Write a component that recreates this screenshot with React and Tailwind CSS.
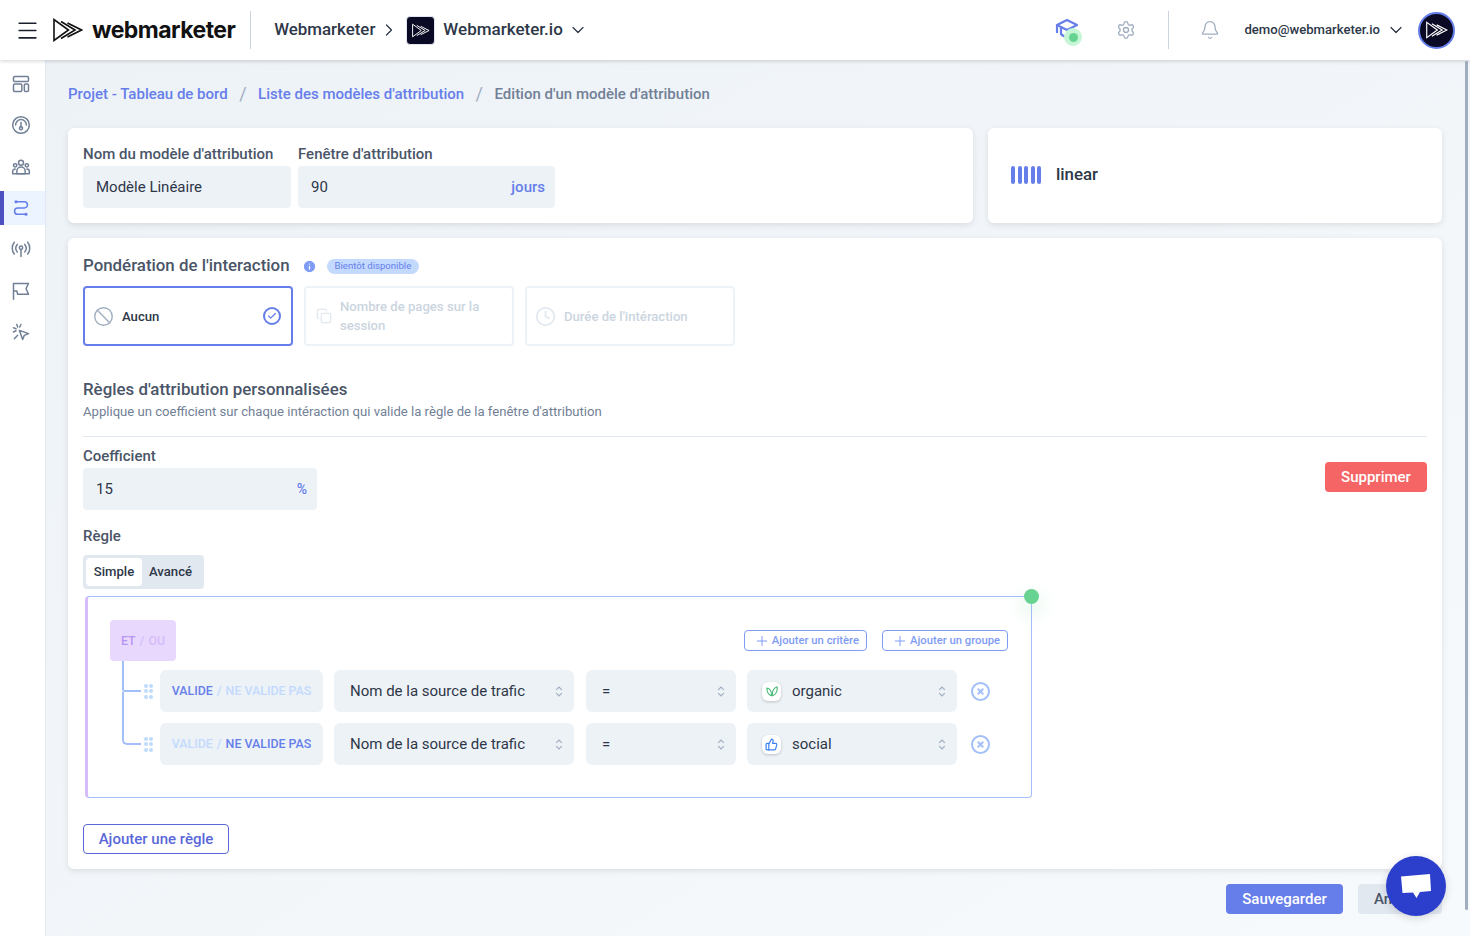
import React from "react";
import { ChevronDown, ChevronRight, Plus, Check, X, Copy, Clock, Ban, Info, Settings, Bell, ThumbsUp, Menu } from "lucide-react";

const Logo = ({ className, color = "#111" }) => (
  <svg viewBox="0 0 30 24" fill="none" stroke={color} strokeWidth="1.6" strokeLinejoin="miter" className={className}>
    <path d="M1 1.500V22.500L15.500 12Z" />
    <path d="M8 3.500L22 12L8 20.500" />
    <path d="M14.500 5L28.500 12L14.500 19" />
  </svg>
);

const SideIcon = ({ children, active }) => (
  <div className={`flex h-[34px] w-full items-center justify-center ${active ? "border-l-4 border-[#4c51bf] bg-[#ebf4ff] pr-[7px] text-[#667eea]" : "pr-[3px] text-[#718096]"}`}>
    <svg viewBox="0 0 24 24" fill="none" stroke="currentColor" strokeWidth="1.8" strokeLinecap="round" strokeLinejoin="round" className="h-[20px] w-[20px]">
      {children}
    </svg>
  </div>
);

const Sidebar = () => (
  <div className="flex w-[46px] shrink-0 flex-col gap-[7.33px] border-r border-[#e2e8f0] bg-white pt-[7px]">
    <SideIcon>
      <rect x="3" y="3" width="18" height="6" rx="1.5" />
      <rect x="3" y="12" width="10" height="9" rx="1.5" />
      <rect x="16" y="12" width="5" height="9" rx="1.5" />
    </SideIcon>
    <SideIcon>
      <circle cx="12" cy="12" r="10" />
      <path d="M5.500 12a6.500 6.500 0 0 1 13 0" />
      <path d="M12 9v5" />
      <circle cx="12" cy="16" r="1.800" />
    </SideIcon>
    <SideIcon>
      <circle cx="12" cy="7" r="3" />
      <circle cx="5" cy="10" r="2" />
      <circle cx="19" cy="10" r="2" />
      <path d="M7 20v-3a5 5 0 0 1 10 0v3Z" />
      <path d="M2 20v-2.500a3 3 0 0 1 3-3M22 20v-2.500a3 3 0 0 0-3-3M2 20h20" />
    </SideIcon>
    <SideIcon active>
      <circle cx="6" cy="4.500" r="1" />
      <path d="M6 4.500h10a3.500 3.500 0 0 1 0 7.500H8a3.700 3.700 0 0 0 0 7.500h10" />
      <circle cx="18" cy="19.500" r="1" />
    </SideIcon>
    <SideIcon>
      <circle cx="12" cy="10.500" r="2" />
      <path d="M12 12.500V21" />
      <path d="M7.500 6.500a7 7 0 0 0 0 9M16.500 6.500a7 7 0 0 1 0 9M4 4a11 11 0 0 0 0 14M20 4a11 11 0 0 1 0 14" />
    </SideIcon>
    <SideIcon>
      <path d="M3 22V3h18l-3 6 3 7H8l-1-4H3" />
    </SideIcon>
    <SideIcon>
      <path d="M10 10l11 4-5 2-2 5Z" />
      <path d="M7 3l1 3M3 7l3 1M12 3l-1.500 3M3 12l3-1.500M4 20l4-4" />
    </SideIcon>
  </div>
);

const Header = () => (
  <div className="relative z-10 flex h-[60px] shrink-0 items-center bg-white pl-[15px] pr-[15px] shadow-[0_1px_4px_rgba(0,0,0,0.18)]">
    <Menu className="h-[25px] w-[25px] text-[#1a202c]" strokeWidth={1.600} />
    <Logo className="ml-[13px] h-[24px] w-[30px]" />
    <span className="ml-[9px] font-['Inter',sans-serif] text-[23px] font-bold tracking-[-0.55px] text-[#111]">webmarketer</span>
    <div className="ml-[15px] h-[38px] w-px bg-[#cbd5e0]" />
    <span className="ml-[23px] text-[16.875px] font-medium text-[#2d3748]">Webmarketer</span>
    <ChevronRight className="ml-[4px] h-5 w-5 text-[#2d3748]" strokeWidth={1.500} />
    <div className="ml-[7px] flex h-[29px] w-[29px] items-center justify-center rounded-[4px] border border-[#e2e8f0] bg-[#0b0a24]">
      <Logo className="h-[15px] w-[18px]" color="#fff" />
    </div>
    <span className="ml-[8px] text-[17px] font-medium text-[#2d3748]">Webmarketer.io</span>
    <ChevronDown className="ml-[5px] h-5 w-5 text-[#2d3748]" strokeWidth={1.500} />
    <div className="relative ml-auto h-[26px] w-[26px]">
      <svg viewBox="0 0 24 24" fill="none" stroke="#667eea" strokeWidth="2.200" strokeLinejoin="round" className="h-[24px] w-[24px]">
        <path d="M12 3L2 8l10 5 10-5Z" />
        <path d="M6 11v6c2 2.500 5 3 7 3" />
        <path d="M2 8v8" />
      </svg>
      <span className="absolute left-[9px] top-[11px] flex h-[18px] w-[18px] items-center justify-center rounded-full bg-[#c6f6d5]">
        <span className="h-[9px] w-[9px] rounded-full bg-[#68d391]" />
      </span>
    </div>
    <Settings className="ml-[35px] h-[20px] w-[20px] text-[#a0aec0]" strokeWidth={1.6} />
    <div className="ml-[32px] h-[38px] w-px bg-[#cbd5e0]" />
    <Bell className="ml-[31px] h-[20px] w-[20px] text-[#a0aec0]" strokeWidth={1.6} />
    <span className="ml-[24px] text-[13.125px] font-medium text-[#2d3748]">demo@webmarketer.io</span>
    <ChevronDown className="ml-[6px] h-5 w-5 text-[#2d3748]" strokeWidth={1.500} />
    <div className="ml-[12px] flex h-[37px] w-[37px] items-center justify-center rounded-full border-2 border-[#667eea] bg-[#0b0a24]">
      <Logo className="h-[18px] w-[22px]" color="#fff" />
    </div>
  </div>
);

const Label = ({ children }) => <p className="text-[15px] font-medium leading-[18px] text-[#4a5568]">{children}</p>;

const Input = ({ value, suffix, className, suffixClass }) => (
  <div className={`flex h-[42px] items-center justify-between rounded-[4px] bg-[#edf2f7] pl-[13px] pr-[10px] text-[15px] text-[#2d3748] ${className}`}>
    <span>{value}</span>
    <span className={`font-medium text-[#667eea] ${suffixClass}`}>{suffix}</span>
  </div>
);

const Option = ({ icon, children, active }) => (
  <div className={`flex h-[60px] w-[210px] items-center rounded-[4px] border-2 pl-[8px] pr-[10px] ${active ? "border-[#667eea] text-[#2d3748]" : "border-[#edf2f7] text-[#cbd5e0]"}`}>
    {icon}
    <span className={`ml-[8px] flex-1 text-[13.125px] font-medium leading-[19px] ${active ? "" : "text-[#cbd5e0]"}`}>{children}</span>
    {active && (
      <span className="flex h-[18px] w-[18px] items-center justify-center rounded-full border-2 border-[#667eea]">
        <Check className="h-[10px] w-[10px] text-[#667eea]" strokeWidth={3} />
      </span>
    )}
  </div>
);

const Updown = () => (
  <svg viewBox="0 0 10 16" fill="none" stroke="#a0aec0" strokeWidth="1.500" className="h-[13px] w-[8px] shrink-0">
    <path d="M1.500 6L5 2.500 8.500 6M1.500 10L5 13.500 8.500 10" />
  </svg>
);

const Select = ({ value, icon, className }) => (
  <div className={`flex h-[42px] items-center justify-between rounded-[6px] bg-[#edf2f7] pl-[16px] pr-[11px] text-[15px] text-[#2d3748] ${className}`}>
    <span className="flex items-center">
      {icon}
      {value}
    </span>
    <Updown />
  </div>
);

const Dots = () => (
  <div className="grid h-[15px] w-[10px] grid-cols-2 content-between justify-between">
    {[0, 1, 2, 3, 4, 5].map((i) => (
      <span key={i} className="h-[4px] w-[4px] rounded-full bg-[#bfdbfe]" />
    ))}
  </div>
);

const RuleRow = ({ negate, icon, value }) => (
  <div className="flex items-center">
    <Dots />
    <div className="ml-[6px] flex h-[42px] w-[163px] items-center justify-center rounded-[6px] bg-[#edf2f7] text-[12.4px] font-medium">
      <span className={negate ? "text-[#c3dafe]" : "text-[#667eea]"}>VALIDE</span>
      <span className="mx-[4px] text-[#c3dafe]">/</span>
      <span className={negate ? "text-[#667eea]" : "text-[#c3dafe]"}>NE VALIDE PAS</span>
    </div>
    <Select value="Nom de la source de trafic" className="ml-[11px] w-[240px]" />
    <Select value="=" className="ml-[12px] w-[150px]" />
    <Select value={value} icon={icon} className="ml-[11px] w-[210px]" />
    <span className="ml-[14px] flex h-[19px] w-[19px] items-center justify-center rounded-full border-2 border-[#a3bffa]">
      <X className="h-[9px] w-[9px] text-[#a3bffa]" strokeWidth={5} />
    </span>
  </div>
);

const OutlineBtn = ({ children }) => (
  <div className="flex h-[21px] items-center rounded-[4px] border border-[#7f9cf5] pl-[9px] pr-[7px] pt-px text-[11.25px] font-medium text-[#7f9cf5]">
    <Plus className="mr-[2px] h-4 w-4" strokeWidth={1.500} />
    {children}
  </div>
);

const ValueIcon = ({ children }) => (
  <span className="-ml-[1px] mr-[11px] flex h-[19px] w-[19px] items-center justify-center rounded-[6px] bg-white shadow-[0_1px_3px_rgba(0,0,0,0.2)]">
    {children}
  </span>
);

const App = () => (
  <div className="relative flex h-[936px] flex-col overflow-hidden font-['Roboto',sans-serif]">
    <Header />
    <div className="flex min-h-0 flex-1">
      <Sidebar />
      <div className="flex-1 bg-gradient-to-br from-[#edf2f7] to-[#f7fafc] pl-[22px] pr-[28px] pt-[24px]">
        <div className="flex h-[20px] items-center text-[15px] font-medium text-[#718096]">
          <span className="text-[#667eea]">Projet - Tableau de bord</span>
          <span className="mx-[11.5px] text-lg font-normal text-[#a0aec0]">/</span>
          <span className="text-[#667eea]">Liste des modèles d'attribution</span>
          <span className="mx-[11.5px] text-lg font-normal text-[#a0aec0]">/</span>
          <span>Edition d'un modèle d'attribution</span>
        </div>

        <div className="mt-[24px] flex gap-[15px]">
          <div className="flex h-[95px] w-[905px] gap-[7px] rounded-[6px] bg-white px-[15px] pt-[17px] shadow-[0_2px_6px_rgba(0,0,0,0.1)]">
            <div className="w-[208px]">
              <Label>Nom du modèle d'attribution</Label>
              <Input value="Modèle Linéaire" className="mt-[3px]" />
            </div>
            <div className="w-[257px]">
              <Label>Fenêtre d'attribution</Label>
              <Input value="90" suffix="jours" className="mt-[3px]" />
            </div>
          </div>
          <div className="flex h-[95px] flex-1 items-center rounded-[6px] bg-white pb-[2px] pl-[23px] shadow-[0_2px_6px_rgba(0,0,0,0.1)]">
            <div className="flex gap-[2.5px]">
              {[0, 1, 2, 3, 4].map((i) => (
                <span key={i} className="h-[18px] w-[4px] rounded-[2px] bg-[#667eea]" />
              ))}
            </div>
            <span className="ml-[15px] text-[16.875px] font-medium text-[#2d3748]">linear</span>
          </div>
        </div>

        <div className="mt-[15px] h-[631px] rounded-[6px] bg-white px-[15px] pt-[18px] shadow-[0_2px_6px_rgba(0,0,0,0.1)]">
          <div className="flex h-[20px] items-center">
            <span className="text-[16.875px] font-medium text-[#4a5568]">Pondération de l'interaction</span>
            <Info className="ml-[12px] h-[15px] w-[15px] fill-[#7f9cf5] text-white" />
            <span className="ml-[10px] flex h-[15px] items-center rounded-full bg-[#c3dafe] px-[8px] text-[9.6px] text-[#667eea]">Bientôt disponible</span>
          </div>
          <div className="mt-[10px] flex gap-[11px]">
            <Option active icon={<Ban className="h-[21px] w-[21px] text-[#a0aec0]" strokeWidth={1.6} />}>Aucun</Option>
            <Option icon={<Copy className="ml-[2px] h-[16px] w-[16px] text-[#e2e8f0]" />}>Nombre de pages sur la session</Option>
            <Option icon={<Clock className="h-[21px] w-[21px] text-[#e2e8f0]" />}>Durée de l'intéraction</Option>
          </div>

          <p className="mt-[33px] text-[16.875px] font-medium leading-[20px] text-[#4a5568]">Règles d'attribution personnalisées</p>
          <p className="mt-[4px] text-[13.125px] leading-[18px] text-[#718096]">Applique un coefficient sur chaque intéraction qui valide la règle de la fenêtre d'attribution</p>
          <div className="mt-[15px] h-px bg-[#e2e8f0]" />

          <div className="mt-[10px] flex items-start justify-between">
            <div>
              <Label>Coefficient</Label>
              <Input value="15" suffix="%" className="mt-[3px] w-[234px]" suffixClass="text-[14px]" />
            </div>
            <div className="mt-[15px] flex h-[30px] w-[102px] items-center justify-center rounded-[4px] bg-[#f56565] text-[15px] font-medium text-white">Supprimer</div>
          </div>

          <div className="mt-[17px]"><Label>Règle</Label></div>
          <div className="mt-[10px] flex h-[34px] w-[121px] items-center rounded-[4px] bg-[#e2e8f0] pl-[3px] text-[13.125px] font-medium text-[#2d3748]">
            <span className="flex h-[28px] w-[56px] items-center justify-center rounded-[4px] bg-white">Simple</span>
            <span className="ml-[7px]">Avancé</span>
          </div>

          <div className="relative ml-[2px] mt-[7px] h-[202px] w-[947px] rounded-[4px] border border-l-[3px] border-[#a3bffa] border-l-[#d6bcfa] pl-[22px] pr-[23px] pt-[23px]">
            <span className="absolute -right-[8px] -top-[8px] h-[15px] w-[15px] rounded-full bg-[#68d391] shadow-[0_8px_20px_rgba(104,211,145,0.35)]" />
            <div className="flex items-center justify-between">
              <div className="flex h-[41px] w-[66px] items-center justify-center rounded-[4px] bg-[#e9d8fd] pt-px text-[12.4px] font-medium">
                <span className="text-[#b794f4]">ET</span>
                <span className="mx-[4px] text-[#d6bcfa]">/</span>
                <span className="text-[#d6bcfa]">OU</span>
              </div>
              <div className="flex gap-[15px]">
                <OutlineBtn>Ajouter un critère</OutlineBtn>
                <OutlineBtn>Ajouter un groupe</OutlineBtn>
              </div>
            </div>
            <span className="absolute left-[34px] top-[64px] h-[31px] w-[19px] rounded-bl-[3px] border-b-2 border-l-2 border-[#a3bffa]" />
            <span className="absolute left-[34px] top-[95px] h-[53px] w-[19px] rounded-bl-[5px] border-b-2 border-l-2 border-[#a3bffa]" />
            <div className="mt-[9px] flex flex-col gap-[11px] pl-[34px]">
              <RuleRow
                value="organic"
                icon={
                  <ValueIcon>
                    <svg viewBox="0 0 14 14" fill="none" stroke="#48bb78" strokeWidth="1.300" strokeLinejoin="round" className="h-[12px] w-[12px]">
                      <path d="M6.500 12.500C3 11.500 1 8.500 1 3.500c3.500.5 5.500 3.500 5.500 9Z" />
                      <path d="M7.500 12.500C7 7 9 3.500 13 2c.5 5-1.500 9-5.500 10.500Z" />
                    </svg>
                  </ValueIcon>
                }
              />
              <RuleRow negate value="social" icon={<ValueIcon><ThumbsUp className="h-[13px] w-[13px] text-[#3b82f6]" strokeWidth={2.200} /></ValueIcon>} />
            </div>
          </div>

          <div className="mt-[26px] flex h-[30px] w-[146px] items-center justify-center rounded-[4px] border border-[#5a67d8] text-[15px] font-medium text-[#5a67d8]">Ajouter une règle</div>
        </div>

        <div className="mt-[15px] flex justify-end gap-[15px]">
          <div className="flex h-[30px] w-[117px] items-center justify-center rounded-[4px] bg-[#667eea] text-[15px] font-medium text-white">Sauvegarder</div>
          <div className="flex h-[30px] w-[84px] items-center justify-center rounded-[4px] bg-[#e2e8f0] text-[15px] font-medium text-[#4a5568]">Annuler</div>
        </div>
      </div>
    </div>

    <span className="absolute right-[2px] top-[61px] h-[849px] w-[3px] rounded-full bg-[#a0aec0]" />
    <div className="absolute left-[1386px] top-[856px] flex h-[60px] w-[60px] items-center justify-center rounded-full bg-[#2b3fcc] shadow-[0_2px_8px_rgba(0,0,0,0.15)]">
      <svg viewBox="0 0 30 24" className="h-[24px] w-[30px]" fill="#fff">
        <path d="M0 2.500L29 0 30 17 19 18 15.500 24 12 18.500 1.500 19Z" />
      </svg>
    </div>
  </div>
);

export default App;
